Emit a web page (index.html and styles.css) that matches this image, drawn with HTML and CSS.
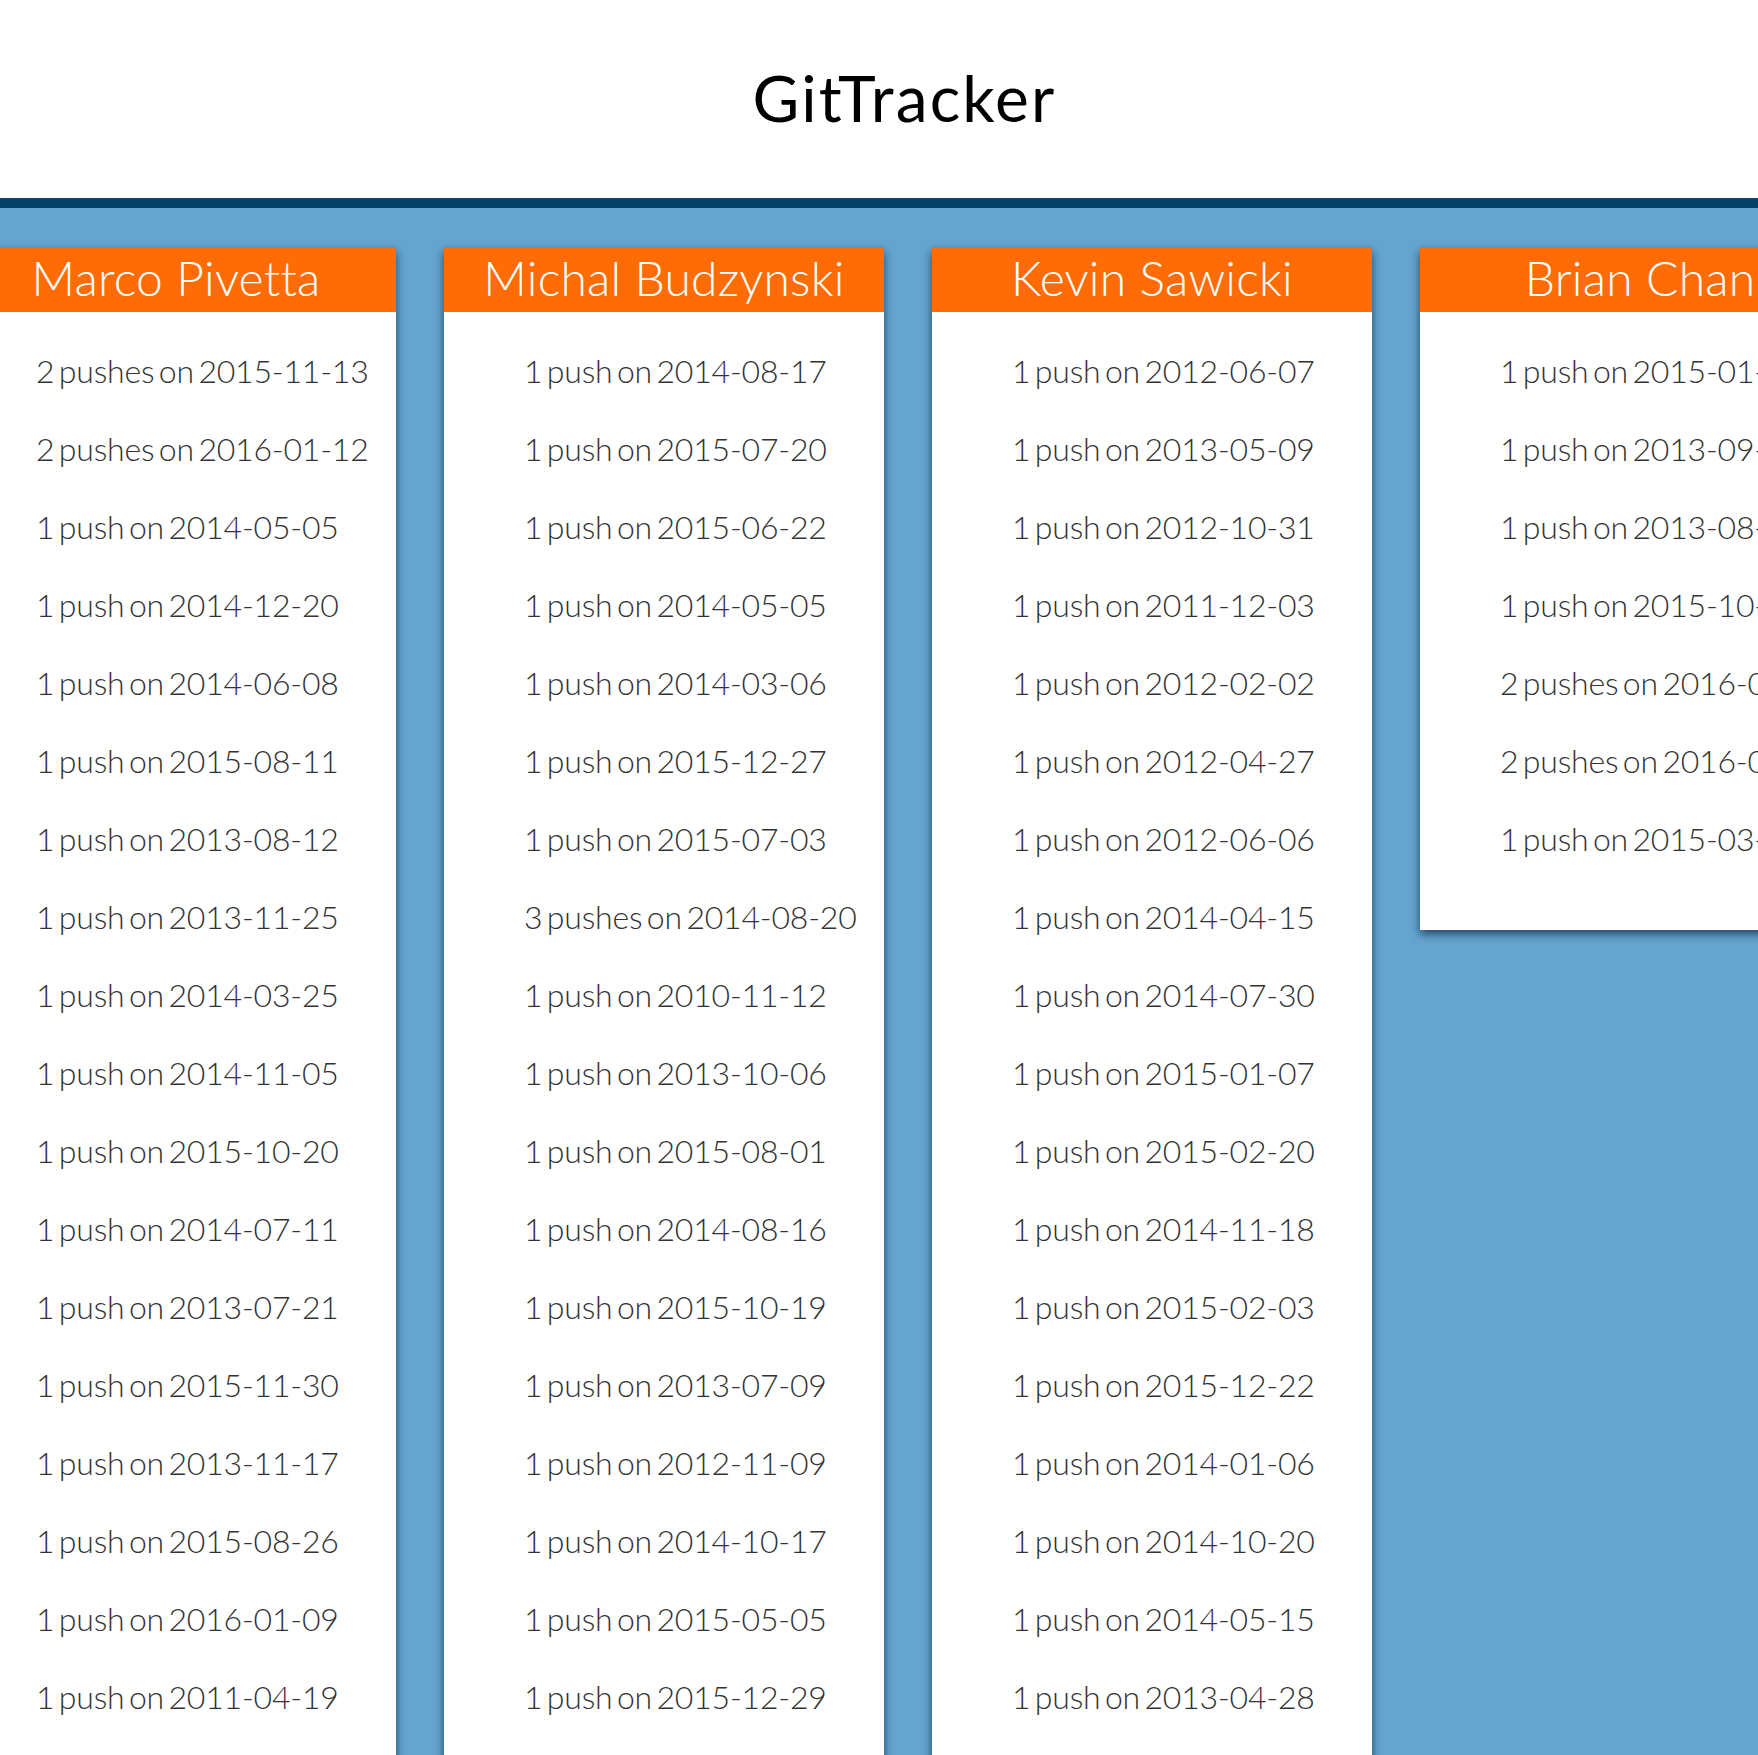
FILE: index.html
```html
<!DOCTYPE html>
<html lang="en">
<head>
<meta charset="utf-8">
<title>GitTracker</title>
<link rel="stylesheet" href="styles.css">
</head>
<body>
<header class="top">
  <h1 class="title">GitTracker</h1>
</header>
<main class="board">
  <section class="card">
    <h2 class="card-name">Marco Pivetta</h2>
    <ul class="pushes">
      <li>2 pushes on 2015-11-13</li>
      <li>2 pushes on 2016-01-12</li>
      <li>1 push on 2014-05-05</li>
      <li>1 push on 2014-12-20</li>
      <li>1 push on 2014-06-08</li>
      <li>1 push on 2015-08-11</li>
      <li>1 push on 2013-08-12</li>
      <li>1 push on 2013-11-25</li>
      <li>1 push on 2014-03-25</li>
      <li>1 push on 2014-11-05</li>
      <li>1 push on 2015-10-20</li>
      <li>1 push on 2014-07-11</li>
      <li>1 push on 2013-07-21</li>
      <li>1 push on 2015-11-30</li>
      <li>1 push on 2013-11-17</li>
      <li>1 push on 2015-08-26</li>
      <li>1 push on 2016-01-09</li>
      <li>1 push on 2011-04-19</li>
    </ul>
  </section>
  <section class="card">
    <h2 class="card-name">Michal Budzynski</h2>
    <ul class="pushes">
      <li>1 push on 2014-08-17</li>
      <li>1 push on 2015-07-20</li>
      <li>1 push on 2015-06-22</li>
      <li>1 push on 2014-05-05</li>
      <li>1 push on 2014-03-06</li>
      <li>1 push on 2015-12-27</li>
      <li>1 push on 2015-07-03</li>
      <li>3 pushes on 2014-08-20</li>
      <li>1 push on 2010-11-12</li>
      <li>1 push on 2013-10-06</li>
      <li>1 push on 2015-08-01</li>
      <li>1 push on 2014-08-16</li>
      <li>1 push on 2015-10-19</li>
      <li>1 push on 2013-07-09</li>
      <li>1 push on 2012-11-09</li>
      <li>1 push on 2014-10-17</li>
      <li>1 push on 2015-05-05</li>
      <li>1 push on 2015-12-29</li>
    </ul>
  </section>
  <section class="card">
    <h2 class="card-name">Kevin Sawicki</h2>
    <ul class="pushes">
      <li>1 push on 2012-06-07</li>
      <li>1 push on 2013-05-09</li>
      <li>1 push on 2012-10-31</li>
      <li>1 push on 2011-12-03</li>
      <li>1 push on 2012-02-02</li>
      <li>1 push on 2012-04-27</li>
      <li>1 push on 2012-06-06</li>
      <li>1 push on 2014-04-15</li>
      <li>1 push on 2014-07-30</li>
      <li>1 push on 2015-01-07</li>
      <li>1 push on 2015-02-20</li>
      <li>1 push on 2014-11-18</li>
      <li>1 push on 2015-02-03</li>
      <li>1 push on 2015-12-22</li>
      <li>1 push on 2014-01-06</li>
      <li>1 push on 2014-10-20</li>
      <li>1 push on 2014-05-15</li>
      <li>1 push on 2013-04-28</li>
    </ul>
  </section>
  <section class="card">
    <h2 class="card-name">Brian Chan</h2>
    <ul class="pushes">
      <li>1 push on 2015-01-14</li>
      <li>1 push on 2013-09-18</li>
      <li>1 push on 2013-08-22</li>
      <li>1 push on 2015-10-05</li>
      <li>2 pushes on 2016-01-08</li>
      <li>2 pushes on 2016-01-11</li>
      <li>1 push on 2015-03-17</li>
    </ul>
  </section>
</main>
</body>
</html>
```
FILE: styles.css
```css
html, body {
  margin: 0;
  padding: 0;
}

body {
  font-family: Lato, "Open Sans", "Liberation Sans", sans-serif;
  background: #64a5cf;
  overflow: hidden;
  min-height: 1755px;
}

.top {
  height: 196px;
  background: #ffffff;
  border-bottom: 10px solid #05426a;
  display: flex;
  align-items: center;
  justify-content: center;
  padding-left: 51px;
  padding-bottom: 2px;
  box-sizing: content-box;
}

.title {
  margin: 0;
  font-size: 64px;
  font-weight: 400;
  line-height: 1.2;
  letter-spacing: 2.1px;
  color: #000000;
}

.board {
  display: flex;
  align-items: flex-start;
  gap: 48px;
  margin-left: -44px;
  padding-top: 40px;
}

.card {
  flex: 0 0 440px;
  background: #ffffff;
  box-shadow: 0 4px 9px rgba(0, 25, 55, 0.7);
}

.card-name {
  margin: 0;
  height: 64px;
  background: #ff6c05;
  color: #ffffff;
  font-size: 48px;
  font-weight: 300;
  line-height: 59px;
  letter-spacing: 0.2px;
  text-align: center;
  white-space: nowrap;
}

.pushes {
  list-style: none;
  margin: 0;
  padding: 20px 0 52px 80px;
}

.pushes li {
  font-size: 32px;
  font-weight: 300;
  line-height: 78px;
  color: #333333;
  word-spacing: -4px;
  letter-spacing: -0.2px;
  white-space: nowrap;
}
```
